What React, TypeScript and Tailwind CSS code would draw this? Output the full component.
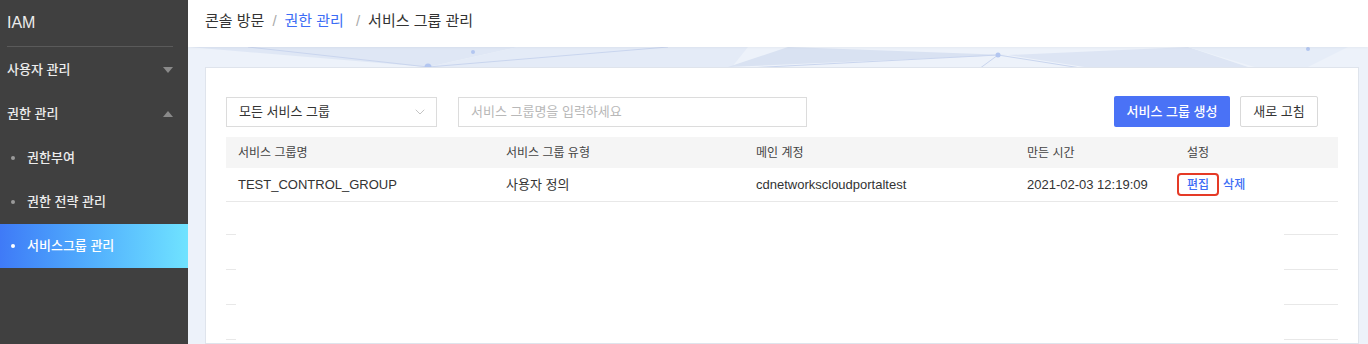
import { ChevronDown } from 'lucide-react'

const FONT = "font-['Liberation_Sans','Noto_Sans_CJK_KR',sans-serif]"

const menu = [
  { label: '권한부여', active: false },
  { label: '권한 전략 관리', active: false },
  { label: '서비스그룹 관리', active: true },
]

const cols = [
  { title: '서비스 그룹명', w: 'w-[268px]' },
  { title: '서비스 그룹 유형', w: 'w-[250px]' },
  { title: '메인 계정', w: 'w-[271px]' },
  { title: '만든 시간', w: 'w-[160px]' },
  { title: '설정', w: 'flex-1' },
]

function Caret({ up }: { up?: boolean }) {
  return (
    <svg width="10" height="6" viewBox="0 0 10 6" className="mr-[15px]">
      {up ? <path d="M0 6 L5 0 L10 6 Z" fill="#8a8a8a" /> : <path d="M0 0 L5 6 L10 0 Z" fill="#8a8a8a" />}
    </svg>
  )
}

function Sidebar() {
  return (
    <div className="w-[188px] shrink-0 bg-[#404040] text-[#ececec]">
      <div className="h-[47px] px-[7px] flex items-end">
        <div className="w-[166px] h-full flex items-center border-b border-[#5a5a5a] text-[16px]">IAM</div>
      </div>
      <div className="h-[45px] pl-[7px] flex items-center justify-between text-[13px] font-medium">
        사용자 관리 <Caret />
      </div>
      <div className="h-[44px] pl-[7px] flex items-center justify-between text-[13px] font-medium">
        권한 관리 <Caret up />
      </div>
      {menu.map((m) => (
        <div
          key={m.label}
          className={
            'h-[44px] pl-[11px] flex items-center text-[13px] font-medium ' +
            (m.active ? 'bg-gradient-to-r from-[#3f7af7] to-[#70e3ff] text-white' : '')
          }
        >
          <span className={'w-[4px] h-[4px] rounded-full mr-[12px] ' + (m.active ? 'bg-white' : 'bg-[#9a9a9a]')} />
          {m.label}
        </div>
      ))}
    </div>
  )
}

function Pattern() {
  return (
    <svg className="absolute left-0 top-[47px] w-full h-[40px]" viewBox="0 0 1180 40" preserveAspectRatio="none">
      <polygon points="0,0 240,20 330,0" fill="#dfe7f5" />
      <polygon points="240,20 330,0 560,0 540,25" fill="#e4ebf7" />
      <polygon points="540,20 600,0 820,8" fill="#d9e2f2" />
      <polygon points="820,8 1000,0 1060,20 960,30" fill="#dde5f4" />
      <polygon points="1000,0 1160,0 1100,30" fill="#e6edf8" />
      <line x1="60" y1="0" x2="240" y2="20" stroke="#c9d5ee" strokeWidth="1" />
      <line x1="240" y1="20" x2="480" y2="0" stroke="#c9d5ee" strokeWidth="1" />
      <line x1="540" y1="22" x2="810" y2="8" stroke="#c9d5ee" strokeWidth="1" />
      <line x1="810" y1="8" x2="780" y2="30" stroke="#c9d5ee" strokeWidth="1" />
      <line x1="810" y1="8" x2="950" y2="30" stroke="#c9d5ee" strokeWidth="1" />
      <circle cx="240" cy="20" r="3.5" fill="#b3c6f0" />
      <circle cx="285" cy="5" r="2" fill="#b3c6f0" />
      <circle cx="810" cy="8" r="2.5" fill="#b3c6f0" />
      <circle cx="1120" cy="2" r="2" fill="#b3c6f0" />
    </svg>
  )
}

export default function App() {
  return (
    <div className={`${FONT} flex w-[1368px] h-[344px] overflow-hidden`}>
      <Sidebar />
      <div className="relative flex-1 bg-[#edf2fa] flex flex-col">
        <Pattern />
        <div className="relative h-[47px] bg-white shadow-[0_1px_3px_rgba(0,0,0,0.04)] flex items-center pl-[17px] pb-[4px] text-[15px] text-[#333]">
          <span>콘솔 방문</span>
          <span className="mx-[8px] text-[#aaa]">/</span>
          <span className="text-[#3d6df5]">권한 관리</span>
          <span className="ml-[12px] mr-[8px] text-[#aaa]">/</span>
          <span>서비스 그룹 관리</span>
        </div>
        <div className="relative mt-[20px] ml-[17px] mr-[9px] flex-1 bg-white border border-[#dfe4ec] px-[20px] pt-[28px]">
          <div className="flex items-center h-[31px] pr-[20px]">
            <div className="w-[211px] h-[30px] border border-[#dcdcdc] flex items-center justify-between pl-[12px] pr-[8px] text-[13px] text-[#333]">
              모든 서비스 그룹
              <ChevronDown size={16} strokeWidth={1.2} className="text-[#b5b5b5]" />
            </div>
            <div className="ml-[21px] w-[349px] h-[30px] border border-[#dcdcdc] flex items-center pl-[12px] text-[13px] text-[#b8b8b8]">
              서비스 그룹명을 입력하세요
            </div>
            <div className="ml-auto w-[116px] h-[31px] rounded-[2px] bg-[#4a72f6] text-white text-[13px] font-medium flex items-center justify-center">
              서비스 그룹 생성
            </div>
            <div className="ml-[10px] w-[78px] h-[31px] rounded-[2px] border border-[#d9d9d9] text-[13px] text-[#333] flex items-center justify-center">
              새로 고침
            </div>
          </div>
          <div className="mt-[10px] text-[12px]">
            <div className="flex h-[31px] items-center bg-[#f5f5f5] text-[#444]">
              {cols.map((c) => (
                <div key={c.title} className={`${c.w} pl-[12px]`}>
                  {c.title}
                </div>
              ))}
            </div>
            <div className="flex h-[34px] items-center border-b border-[#e8e8e8] text-[13px] text-[#333]">
              <div className="w-[268px] pl-[12px]">TEST_CONTROL_GROUP</div>
              <div className="w-[250px] pl-[12px]">사용자 정의</div>
              <div className="w-[271px] pl-[12px]">cdnetworkscloudportaltest</div>
              <div className="w-[160px] pl-[12px]">2021-02-03 12:19:09</div>
              <div className="flex-1 pl-[12px] flex items-center text-[12px] text-[#3d6df5] font-medium">
                <span className="-ml-[10px] px-[8px] h-[23px] flex items-center border-2 border-[#e53a26] rounded-[4px]">편집</span>
                <span className="ml-[4px]">삭제</span>
              </div>
            </div>
            {[0, 1, 2, 3].map((i) => (
              <div key={i} className={`flex justify-between ${i === 0 ? 'h-[33px]' : 'h-[35px]'} items-end`}>
                <div className="w-[10px] border-b border-[#e8e8e8]" />
                <div className="w-[54px] border-b border-[#e8e8e8]" />
              </div>
            ))}
          </div>
        </div>
      </div>
    </div>
  )
}
